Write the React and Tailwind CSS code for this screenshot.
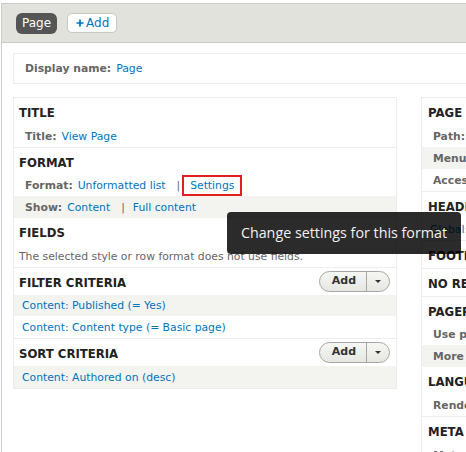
import { Plus } from "lucide-react";

const LINK = "text-[#0074bd]";

function Heading({ children, right, pl = "pl-[5px]" }) {
	return (
		<div className={`h-[27px] flex items-center justify-between ${pl} pr-[6px]`}>
			<span className="font-bold uppercase text-[11.7px] text-[#222] translate-y-[1.5px]">{children}</span>
			{right}
		</div>
	);
}

function Row({ label, children, shade, h = "h-[21px]", pl = "pl-[11px]" }) {
	return (
		<div className={`${h} ${pl} pt-[2px] flex items-center gap-[5px] ${shade ? "bg-[#f3f3ef]" : ""}`}>
			{label && <span className="font-bold text-[#666]">{label}</span>}
			{children}
		</div>
	);
}

function AddButton() {
	return (
		<div className="flex h-[21px] w-[71px] items-center rounded-full border border-[#a6a6a6] bg-gradient-to-b from-[#f6f6f3] to-[#e7e7e2] text-[11px]">
			<span className="flex-1 text-center font-bold text-[#333] pl-[2px]">Add</span>
			<span className="flex h-full w-[23px] items-center justify-center border-l border-[#a6a6a6]">
				<span className="block h-0 w-0 border-x-[3px] border-t-[3px] border-x-transparent border-t-[#333]" />
			</span>
		</div>
	);
}

function LeftColumn() {
	return (
		<div className="w-[384px] shrink-0 border border-[#ececec] self-start">
			<div className="border-b border-[#eee]">
				<Heading>Title</Heading>
				<Row label="Title:" h="h-[22px]">
					<span className={LINK}>View Page</span>
				</Row>
			</div>
			<Heading>Format</Heading>
			<Row label="Format:">
				<span className={LINK}>Unformatted list</span>
				<span className="ml-[6px] text-[#666]">|</span>
				<span className={`${LINK} -ml-[3px] -mt-[2px] border-2 border-[#e21e1e] px-[6px] h-[21px] leading-[17px]`}>Settings</span>
			</Row>
			<Row label="Show:" shade h="h-[22px]">
				<span className={LINK}>Content</span>
				<span className="ml-[6px] mr-[3px] text-[#666]">|</span>
				<span className={LINK}>Full content</span>
			</Row>
			<div className="border-b border-[#eee]">
				<Heading>Fields</Heading>
				<Row h="h-[22px]" pl="pl-[5px]">
					<span className="text-[#666]">The selected style or row format does not use fields.</span>
				</Row>
			</div>
			<div className="border-b border-[#eee]">
				<Heading right={<AddButton />}>Filter criteria</Heading>
				<Row shade pl="pl-[8px]">
					<span className={LINK}>Content: Published (= Yes)</span>
				</Row>
				<Row h="h-[22px]" pl="pl-[8px]">
					<span className={LINK}>Content: Content type (= Basic page)</span>
				</Row>
			</div>
			<Heading right={<AddButton />}>Sort criteria</Heading>
			<Row shade h="h-[22px]" pl="pl-[8px]">
				<span className={LINK}>Content: Authored on (desc)</span>
			</Row>
		</div>
	);
}

function RightColumn() {
	return (
		<div className="w-[384px] shrink-0 border border-[#ececec] self-start">
			<div className="border-b border-[#eee]">
				<Heading pl="pl-[6px]">Page settings</Heading>
				<Row label="Path:" h="h-[22px]">
					<span className={LINK}>/page</span>
				</Row>
				<Row label="Menu:" shade h="h-[22px]">
					<span className={LINK}>No menu</span>
				</Row>
				<Row label="Access:" h="h-[22px]">
					<span className={LINK}>Permission</span>
				</Row>
			</div>
			<div className="border-b border-[#eee]">
				<Heading pl="pl-[6px]">Header</Heading>
				<Row h="h-[21px]" pl="pl-[8px]">
					<span className={LINK}>Global: Text area</span>
				</Row>
			</div>
			<div className="border-b border-[#eee]">
				<Heading pl="pl-[6px]">Footer</Heading>
			</div>
			<div className="border-b border-[#eee]">
				<Heading pl="pl-[6px]">No results behavior</Heading>
			</div>
			<Heading pl="pl-[6px]">Pager</Heading>
			<Row label="Use pager:" h="h-[21px]">
				<span className={LINK}>Full</span>
			</Row>
			<Row label="More link:" shade h="h-[22px]">
				<span className={LINK}>No</span>
			</Row>
			<div className="border-b border-[#eee]">
				<Heading pl="pl-[6px]">Language</Heading>
				<Row label="Rendering Language:" h="h-[22px]">
					<span className={LINK}>Content language</span>
				</Row>
			</div>
			<Heading pl="pl-[6px]">Meta tags</Heading>
			<Row label="Meta tags:" h="h-[22px]">
				<span className={LINK}>Using defaults</span>
			</Row>
		</div>
	);
}

export default function App() {
	return (
		<div
			className="relative w-[466px] h-[452px] overflow-hidden bg-white text-[10.8px]"
			style={{ fontFamily: '"DejaVu Sans", Verdana, sans-serif' }}
		>
			<div className="ml-[1px] mt-[3px] w-[900px] h-[460px] border-l border-t border-[#ccc]">
				<div className="h-[39px] bg-[#e1e2dc] border-b border-[#c9c9c3] flex items-center gap-[10px] pl-[14px]">
					<span className="h-[21px] px-[6px] flex items-center rounded-[6px] bg-[#555] text-white text-[12px]">Page</span>
					<span className="h-[20px] px-[7px] flex items-center rounded-[5px] bg-white border border-[#c8c8c2] text-[#0074bd] text-[12px]">
						<Plus size={10} strokeWidth={4} className="mr-[1px]" />
						Add
					</span>
				</div>
				<div className="pl-[11px] pt-[10px]">
					<div className="h-[31px] border border-[#ececec] flex items-center gap-[5px] pl-[11px] pt-[1px]">
						<span className="font-bold text-[#666]">Display name:</span>
						<span className={LINK}>Page</span>
					</div>
					<div className="mt-[13px] flex gap-[24px]">
						<LeftColumn />
						<RightColumn />
					</div>
				</div>
			</div>
			<div
				className="absolute left-[227px] top-[212px] w-[234px] h-[42px] rounded-[4px] bg-black/[0.83] text-[#f0f0f0] text-[14.3px] flex items-center justify-center"
				style={{ fontFamily: '"Open Sans", sans-serif' }}
			>
				Change settings for this format
			</div>
		</div>
	);
}
